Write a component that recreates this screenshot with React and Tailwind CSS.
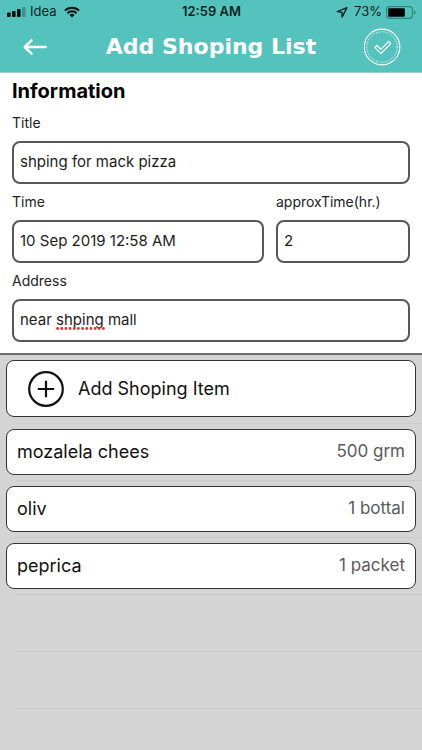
import { useState } from "react";

const items = [
  { id: 1, name: "mozalela chees", qty: "500 grm" },
  { id: 2, name: "oliv", qty: "1 bottal" },
  { id: 3, name: "peprica", qty: "1 packet" },
];

const inputClass =
  "block h-[43px] w-full rounded-lg border-2 border-[#585858] bg-white px-1.5 pb-0.5 text-[15px] text-[#1c1c1c] outline-none";

function StatusBar() {
  return (
    <div className="grid h-6 grid-cols-3 items-center pl-[7px] pr-1.5 text-[13px] text-[#0b2422]">
      <div className="flex items-center">
        <svg viewBox="0 0 19 10" className="mr-1 h-2.5 w-[19px]" aria-hidden="true">
          <rect x="0" y="5.5" width="3.6" height="4.5" rx="0.8" fill="#03100f" />
          <rect x="5" y="4" width="3.6" height="6" rx="0.8" fill="#03100f" />
          <rect x="10" y="2" width="3.6" height="8" rx="0.8" fill="#03100f" />
          <rect x="15" y="0" width="3.6" height="10" rx="0.8" fill="#3a918b" />
        </svg>
        <span>Idea</span>
        <svg viewBox="0 0 16 12" className="ml-2 h-3 w-4" aria-hidden="true">
          <g fill="none" stroke="#03100f" strokeWidth="2">
            <path d="M0.9 4.6a10.1 10.1 0 0 1 14.2 0" />
            <path d="M3.4 7.2a6.5 6.5 0 0 1 9.2 0" />
          </g>
          <path d="M8 11.6 5.4 9a3.7 3.7 0 0 1 5.2 0z" fill="#03100f" />
        </svg>
      </div>
      <span className="text-center font-semibold whitespace-nowrap">12:59 AM</span>
      <div className="flex items-center justify-end">
        <svg viewBox="0 0 12 12" className="mr-1.5 h-3 w-3" aria-hidden="true">
          <path
            d="M10.9 1.6 1.2 5.6l4.7.6.2 4.9z"
            fill="none"
            stroke="#0b2422"
            strokeWidth="1.4"
            strokeLinejoin="round"
          />
        </svg>
        <span>73%</span>
        <svg viewBox="0 0 30 13" className="ml-1 h-[13px] w-[30px]" aria-hidden="true">
          <rect x="0.6" y="0.6" width="25.8" height="11.8" rx="3" fill="none" stroke="#2f8680" strokeWidth="1.1" />
          <rect x="2.2" y="2.2" width="16.6" height="8.6" rx="1" fill="#000" />
          <path d="M27.8 4.3q1.8.6 1.8 2.2t-1.8 2.2z" fill="#2f8680" />
        </svg>
      </div>
    </div>
  );
}

function NavBar() {
  return (
    <div className="grid h-12 grid-cols-[40px_1fr_40px] items-center px-5 pb-0.5">
      <button type="button" aria-label="Back" className="flex h-10 items-center pl-0.5">
        <svg viewBox="0 0 26 18" className="h-[18px] w-[26px]" aria-hidden="true">
          <path
            d="M23.6 9H3M9.5 2.4 2.8 9l6.7 6.6"
            fill="none"
            stroke="#fff"
            strokeWidth="2.5"
            strokeLinecap="round"
            strokeLinejoin="round"
          />
        </svg>
      </button>
      <h1 className="text-center font-['DejaVu_Sans',sans-serif] text-[22px] leading-7 font-bold whitespace-nowrap text-white">
        Add Shoping List
      </h1>
      <button type="button" aria-label="Save" className="flex h-10 items-center justify-end">
        <svg viewBox="0 0 38 38" className="h-[38px] w-[38px]" fill="none" stroke="#fff" aria-hidden="true">
          <circle cx="18" cy="19" r="17.8" strokeWidth="1.2" />
          <circle cx="18" cy="19" r="15.2" strokeWidth="1" strokeDasharray="1.2 1.4" />
          <path d="m10.8 19.6 2.1-2.1 3.9 3.9 7.8-7.9 2.1 2.1-9.9 10z" strokeWidth="1.2" strokeLinejoin="round" />
        </svg>
      </button>
    </div>
  );
}

function Field({ id, label, className, value, onChange, children }) {
  return (
    <div className={className}>
      <label htmlFor={id} className="block h-9 text-sm leading-9 text-[#222]">
        {label}
      </label>
      <div className="relative">
        <input
          id={id}
          name={id}
          className={inputClass}
          value={value}
          onChange={onChange}
          spellCheck={false}
        />
        {children}
      </div>
    </div>
  );
}

export default function App() {
  const [form, setForm] = useState({
    title: "shping for mack pizza",
    time: "10 Sep 2019 12:58 AM",
    approxTime: "2",
    address: "near shping mall",
  });

  const handleChange = (e) => setForm({ ...form, [e.target.name]: e.target.value });

  return (
    <div className="flex min-h-screen flex-col bg-[#d4d4d4] font-['Inter',sans-serif]">
      <header className="border-b border-[#a3cccb] bg-[#54c3bd]">
        <StatusBar />
        <NavBar />
      </header>

      <form className="border-b-2 border-[#6e6e6e] bg-white px-3 pb-[11px]">
        <h2 className="pt-1 text-xl leading-7 font-bold text-black">Information</h2>
        <Field id="title" label="Title" value={form.title} onChange={handleChange} />
        <div className="flex gap-3">
          <Field
            id="time"
            label="Time"
            className="min-w-0 flex-[252]"
            value={form.time}
            onChange={handleChange}
          />
          <Field
            id="approxTime"
            label="approxTime(hr.)"
            className="min-w-0 flex-[134]"
            value={form.approxTime}
            onChange={handleChange}
          />
        </div>
        <Field id="address" label="Address" value={form.address} onChange={handleChange}>
          {/* spelling mark under the second word */}
          <svg
            viewBox="0 0 49 3"
            className="pointer-events-none absolute bottom-3 left-11 h-[3px] w-[49px]"
            aria-hidden="true"
          >
            <path d="M1.5 1.5h46" stroke="#e5342b" strokeWidth="2.8" strokeLinecap="round" strokeDasharray="0.1 4.07" />
          </svg>
        </Field>
      </form>

      <main className="flex-1">
        <div className="px-1.5 pt-[5px]">
          <button
            type="button"
            className="flex h-[57px] w-full items-center gap-3.5 rounded-lg border border-[#333] bg-white pl-[21px] text-left text-lg text-[#111]"
          >
            <svg viewBox="0 0 36 36" className="h-9 w-9" fill="none" stroke="#111" aria-hidden="true">
              <circle cx="18" cy="18" r="16.8" strokeWidth="2.2" />
              <path d="M18 9.8v16.4M9.8 18h16.4" strokeWidth="2.2" />
            </svg>
            Add Shoping Item
          </button>
        </div>
        <div className="mt-1.5 ml-4 h-px bg-[#cbcbcd]" />

        <ul>
          {items.map((item) => (
            <li key={item.id}>
              <div className="px-1.5 py-[5px]">
                <div className="flex h-[46px] items-center justify-between rounded-lg border border-[#333] bg-white px-2.5">
                  <span className="text-lg text-[#111]">{item.name}</span>
                  <span className="text-[17px] text-[#5a5a5a]">{item.qty}</span>
                </div>
              </div>
              <div className="ml-4 h-px bg-[#cbcbcd]" />
            </li>
          ))}
        </ul>
        <div className="ml-4 h-[57px] border-b border-[#cbcbcd]" />
        <div className="ml-4 h-[57px] border-b border-[#cbcbcd]" />
      </main>
    </div>
  );
}
